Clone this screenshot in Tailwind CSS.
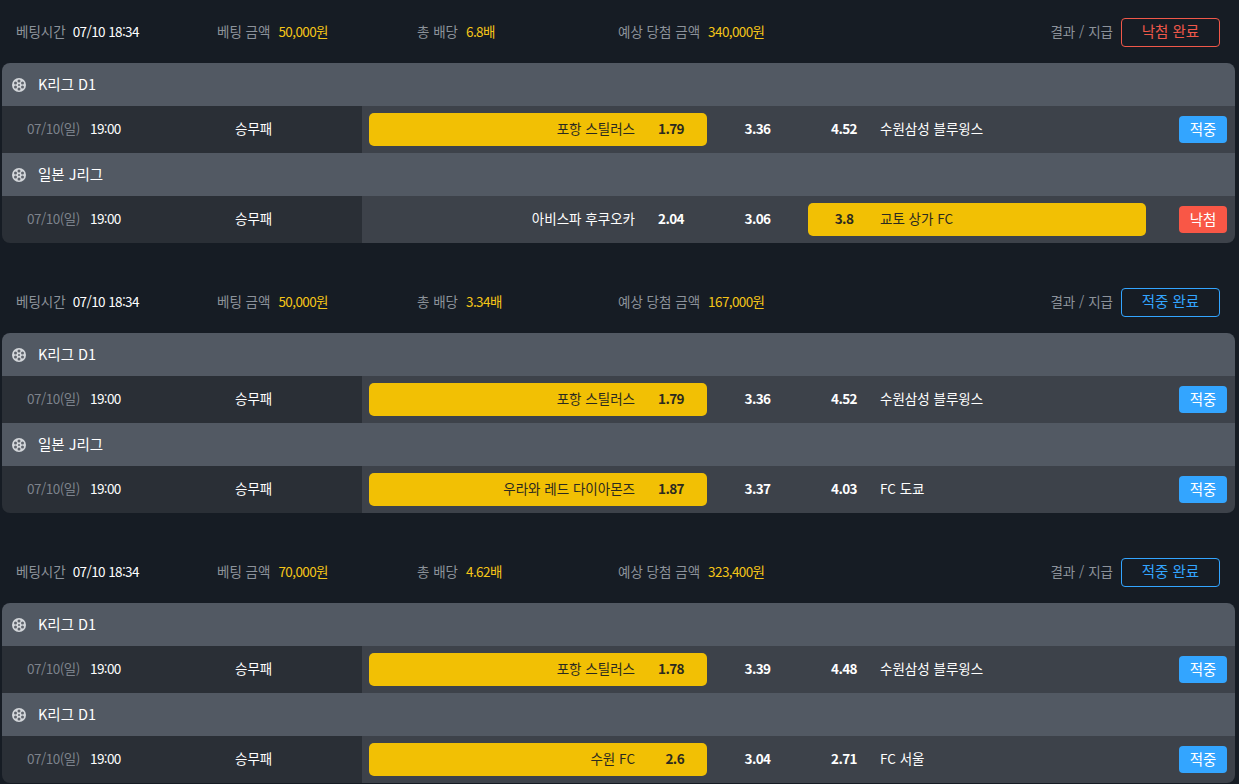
<!DOCTYPE html>
<html lang="ko">

<head>
    <meta charset="UTF-8" />
    <meta name="viewport" content="width=device-width, initial-scale=1.0" />
    <title>Betting history</title>
    <script src="https://cdn.jsdelivr.net/npm/@tailwindcss/browser@4"></script>
</head>

<body class="bg-[#161c24] overflow-hidden font-['Noto_Sans_CJK_KR','Noto_Sans',sans-serif] text-[13.5px]">
    <div id="list" class="w-[1239px] h-[784px] overflow-hidden"></div>

    <script>
        // Film reel icon in front of each league name
        const reel = `
            <svg class="w-[14px] h-[14px] shrink-0" viewBox="0 0 14 14">
                <circle cx="7" cy="7" r="7" fill="#d4d7db" />
                <g fill="#5f646c">
                    <circle cx="7" cy="7" r="1" />
                    <circle cx="7" cy="3" r="1.5" />
                    <circle cx="7" cy="11" r="1.5" />
                    <circle cx="3.5" cy="5" r="1.5" />
                    <circle cx="10.5" cy="5" r="1.5" />
                    <circle cx="3.5" cy="9" r="1.5" />
                    <circle cx="10.5" cy="9" r="1.5" />
                </g>
            </svg>`;

        const bets = [
            {
                amount: '50,000원', odds: '6.8배', payout: '340,000원', won: false,
                games: [
                    { league: 'K리그 D1', home: '포항 스틸러스', o1: '1.79', o2: '3.36', o3: '4.52', away: '수원삼성 블루윙스', pick: 'home', won: true },
                    { league: '일본 J리그', home: '아비스파 후쿠오카', o1: '2.04', o2: '3.06', o3: '3.8', away: '교토 상가 FC', pick: 'away', won: false },
                ],
            },
            {
                amount: '50,000원', odds: '3.34배', payout: '167,000원', won: true,
                games: [
                    { league: 'K리그 D1', home: '포항 스틸러스', o1: '1.79', o2: '3.36', o3: '4.52', away: '수원삼성 블루윙스', pick: 'home', won: true },
                    { league: '일본 J리그', home: '우라와 레드 다이아몬즈', o1: '1.87', o2: '3.37', o3: '4.03', away: 'FC 도쿄', pick: 'home', won: true },
                ],
            },
            {
                amount: '70,000원', odds: '4.62배', payout: '323,400원', won: true,
                games: [
                    { league: 'K리그 D1', home: '포항 스틸러스', o1: '1.78', o2: '3.39', o3: '4.48', away: '수원삼성 블루윙스', pick: 'home', won: true },
                    { league: 'K리그 D1', home: '수원 FC', o1: '2.6', o2: '3.04', o3: '2.71', away: 'FC 서울', pick: 'home', won: true },
                ],
            },
        ];

        function renderGame(g) {
            const homeCell = g.pick === 'home'
                ? `<div class="ml-[7px] w-[338px] h-[33px] pb-[2px] rounded-[5px] bg-[#f2c004] flex items-center justify-end text-[#2b2a20]"><span>${g.home}</span><span class="w-[49px] text-right font-bold tracking-[-0.6px] mr-[23px]">${g.o1}</span></div>`
                : `<div class="ml-[7px] w-[338px] h-[33px] pb-[2px] flex items-center justify-end text-white"><span>${g.home}</span><span class="w-[49px] text-right font-bold tracking-[-0.6px] mr-[23px]">${g.o1}</span></div>`;
            const awayCell = g.pick === 'away'
                ? `<div class="w-[338px] h-[33px] pb-[2px] rounded-[5px] bg-[#f2c004] flex items-center text-[#2b2a20]"><span class="w-[72px] text-center font-bold tracking-[-0.6px]">${g.o3}</span><span>${g.away}</span></div>`
                : `<span class="w-[72px] pb-[2px] text-center text-white font-bold tracking-[-0.6px]">${g.o3}</span><span class="pb-[2px] text-white">${g.away}</span>`;
            const badge = g.won
                ? `<span class="ml-auto mr-[8px] w-[48px] h-[27px] pb-[2px] rounded-[4px] bg-[#33a5ff] text-white text-[14.5px] flex items-center justify-center">적중</span>`
                : `<span class="ml-auto mr-[8px] w-[48px] h-[27px] pb-[2px] rounded-[4px] bg-[#f95746] text-white text-[14.5px] flex items-center justify-center">낙첨</span>`;

            return `
                <div class="h-[43px] bg-[#525963] flex items-center pl-[10px] gap-[12px] text-white text-[14.5px]">
                    ${reel}<span class="pb-[2px]">${g.league}</span>
                </div>
                <div class="h-[47px] flex">
                    <div class="w-[360px] pb-[2px] bg-[#2a2f36] flex items-center pl-[25px]">
                        <span class="w-[63px] text-[#7d838c] tracking-[-0.5px]">07/10(일)</span>
                        <span class="w-[145px] text-white tracking-[-0.6px]">19:00</span>
                        <span class="text-white">승무패</span>
                    </div>
                    <div class="flex-1 bg-[#3d424a] flex items-center">
                        ${homeCell}
                        <span class="w-[101px] pb-[2px] text-center text-white font-bold tracking-[-0.6px]">${g.o2}</span>
                        ${awayCell}
                        ${badge}
                    </div>
                </div>`;
        }

        function renderBet(b) {
            const status = b.won
                ? `<span class="w-[99px] h-[29px] pb-[2px] flex items-center justify-center rounded-[4px] border border-[#33a5ff] text-[#33a5ff] text-[14.5px]">적중 완료</span>`
                : `<span class="w-[99px] h-[29px] pb-[2px] flex items-center justify-center rounded-[4px] border border-[#f0584a] text-[#f0584a] text-[14.5px]">낙첨 완료</span>`;

            return `
                <div class="mb-[27px]">
                    <div class="h-[63px] flex items-center pl-[16px] pr-[19px] pt-[1px]">
                        <div class="w-[201px] pb-[2px] flex gap-[7px]"><span class="text-[#8c929a]">베팅시간</span><span class="text-white tracking-[-0.6px]">07/10 18:34</span></div>
                        <div class="w-[200px] pb-[2px] flex gap-[8px]"><span class="text-[#8c929a]">베팅 금액</span><span class="text-[#f5c518] tracking-[-0.6px]">${b.amount}</span></div>
                        <div class="w-[201px] pb-[2px] flex gap-[8px]"><span class="text-[#8c929a]">총 배당</span><span class="text-[#f5c518] tracking-[-0.6px]">${b.odds}</span></div>
                        <div class="pb-[2px] flex gap-[8px]"><span class="text-[#8c929a]">예상 당첨 금액</span><span class="text-[#f5c518] tracking-[-0.6px]">${b.payout}</span></div>
                        <div class="ml-auto flex items-center gap-[8px]">
                            <span class="pb-[2px] text-[#8c929a]">결과 / 지급</span>
                            ${status}
                        </div>
                    </div>
                    <div class="ml-[2px] mr-[4px] rounded-[8px] overflow-hidden">
                        ${b.games.map(renderGame).join('')}
                    </div>
                </div>`;
        }

        document.getElementById('list').innerHTML = bets.map(renderBet).join('');
    </script>
</body>

</html>
